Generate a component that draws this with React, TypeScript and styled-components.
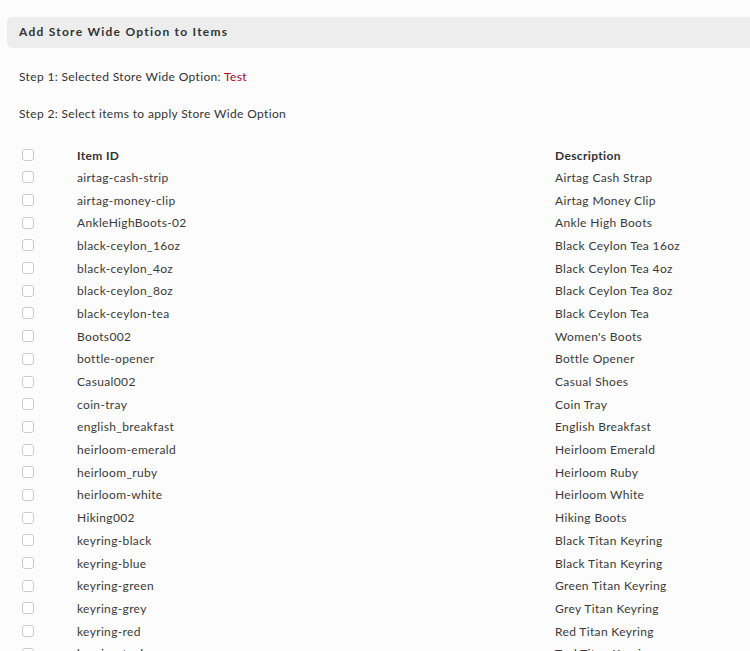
import React from 'react'
import styled, { createGlobalStyle } from 'styled-components'

const GlobalStyle = createGlobalStyle`
  body {
    margin: 0;
    background: #fcfcfc;
    font-family: Lato, 'Open Sans', sans-serif;
    color: #333;
    overflow: hidden;
  }
`

const items: [string, string][] = [
  ['airtag-cash-strip', 'Airtag Cash Strap'],
  ['airtag-money-clip', 'Airtag Money Clip'],
  ['AnkleHighBoots-02', 'Ankle High Boots'],
  ['black-ceylon_16oz', 'Black Ceylon Tea 16oz'],
  ['black-ceylon_4oz', 'Black Ceylon Tea 4oz'],
  ['black-ceylon_8oz', 'Black Ceylon Tea 8oz'],
  ['black-ceylon-tea', 'Black Ceylon Tea'],
  ['Boots002', "Women's Boots"],
  ['bottle-opener', 'Bottle Opener'],
  ['Casual002', 'Casual Shoes'],
  ['coin-tray', 'Coin Tray'],
  ['english_breakfast', 'English Breakfast'],
  ['heirloom-emerald', 'Heirloom Emerald'],
  ['heirloom_ruby', 'Heirloom Ruby'],
  ['heirloom-white', 'Heirloom White'],
  ['Hiking002', 'Hiking Boots'],
  ['keyring-black', 'Black Titan Keyring'],
  ['keyring-blue', 'Black Titan Keyring'],
  ['keyring-green', 'Green Titan Keyring'],
  ['keyring-grey', 'Grey Titan Keyring'],
  ['keyring-red', 'Red Titan Keyring'],
  ['keyring-teal', 'Teal Titan Keyring'],
  ['keyring-white', 'White Titan Keyring'],
]

const Page = styled.div`
  padding: 17px 0 0 7px;
  height: 651px;
  box-sizing: border-box;
  overflow: hidden;
`

const Header = styled.div`
  height: 31px;
  box-sizing: border-box;
  padding: 0 0 2px 12px;
  background: #ededed;
  border-radius: 5px 0 0 5px;
  display: flex;
  align-items: center;
  font-size: 12px;
  font-weight: 700;
  letter-spacing: 1.25px;
  color: #333;
`

const Step = styled.p`
  margin: 0;
  padding-left: 12px;
  font-size: 12px;
  letter-spacing: 0.35px;
  line-height: 16px;
  &:first-of-type {
    margin-top: 21px;
  }
  & + & {
    margin-top: 21px;
  }
`

const Highlight = styled.span`
  color: #b0001e;
`

const Table = styled.div`
  margin-top: 22px;
  padding-left: 15px;
`

const Row = styled.div<{ head?: boolean }>`
  display: grid;
  grid-template-columns: 55px 478px 1fr;
  align-items: center;
  height: ${({ head }) => (head ? '22px' : '22.7px')};
  font-size: 12px;
  letter-spacing: 0.35px;
  font-weight: ${({ head }) => (head ? 700 : 400)};
  color: ${({ head }) => (head ? '#333' : '#3a3a3a')};
  white-space: nowrap;
`

const Check = styled.span`
  display: block;
  width: 10px;
  height: 10px;
  border: 1px solid #cbcbcb;
  border-radius: 3px;
  background: #fff;
`

export default function App() {
  return (
    <>
      <GlobalStyle />
      <Page>
        <Header>Add Store Wide Option to Items</Header>
        <Step>
          Step 1: Selected Store Wide Option: <Highlight>Test</Highlight>
        </Step>
        <Step>Step 2: Select items to apply Store Wide Option</Step>
        <Table>
          <Row head>
            <Check />
            <span>Item ID</span>
            <span>Description</span>
          </Row>
          {items.map(([id, desc]) => (
            <Row key={id}>
              <Check />
              <span>{id}</span>
              <span>{desc}</span>
            </Row>
          ))}
        </Table>
      </Page>
    </>
  )
}
